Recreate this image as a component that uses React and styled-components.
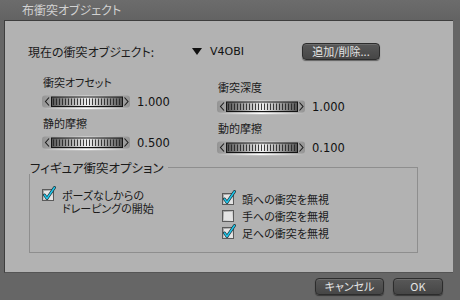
import React from 'react';
import styled, { createGlobalStyle } from 'styled-components';

const GlobalStyle = createGlobalStyle`
  body {
    margin: 0;
    background: #666;
    font-family: "Noto Sans CJK JP", "Noto Sans", sans-serif;
    font-feature-settings: "palt";
  }
`;

const Window = styled.div`
  width: 460px;
  height: 300px;
  display: flex;
  flex-direction: column;
  background: #666;
  overflow: hidden;
`;

const TitleBar = styled.div`
  height: 20px;
  flex: none;
  padding-left: 22px;
  font-size: 12px;
  line-height: 20px;
  color: #d2d2d2;
  background: linear-gradient(#6c6c6c, #636363);
`;

const Panel = styled.div`
  flex: none;
  box-sizing: border-box;
  width: 449px;
  height: 253px;
  margin-left: 4px;
  padding: 22px 0 0 23px;
  background: #b2b2b2;
  border-left: 1px solid #3e3e3e;
  border-top: 1px solid #3e3e3e;
  border-bottom: 1px solid #555;
  color: #1a1a1a;
`;

const CurrentRow = styled.div`
  display: flex;
  align-items: center;
  height: 17px;
`;

const CurrentLabel = styled.span`
  width: 164px;
  font-size: 12px;
`;

const DropArrow = styled.svg`
  width: 10px;
  height: 8px;
  margin-right: 8px;
`;

const ObjectName = styled.span`
  width: 92px;
  font-family: "DejaVu Sans", sans-serif;
  font-size: 11px;
  color: #111;
`;

const DarkButton = styled.button`
  box-sizing: border-box;
  width: ${p => p.$w}px;
  height: 17px;
  padding: 0;
  border: 1px solid #2c2c2c;
  border-radius: 4px;
  background: linear-gradient(#585858, #464646);
  box-shadow: 0 1px 1px rgba(0, 0, 0, 0.45), inset 0 1px 0 rgba(255, 255, 255, 0.12);
  color: #e4e4e4;
  font-family: inherit;
  font-feature-settings: "palt";
  font-size: 11px;
  line-height: 15px;
`;

const SliderGrid = styled.div`
  display: grid;
  grid-template-columns: 175px auto;
  margin-top: 15px;
  padding-left: 12px;
`;

const SliderColumn = styled.div`
  display: flex;
  flex-direction: column;
  gap: 6px;
  padding-top: ${p => p.$offset || 0}px;
`;

const SliderBlock = styled.div`
  display: flex;
  flex-direction: column;
  gap: 5px;
`;

const SliderLabel = styled.div`
  height: 14px;
  padding-left: 3px;
  font-size: 11px;
  line-height: 14px;
`;

const SliderRow = styled.div`
  display: flex;
  align-items: center;
  gap: 5px;
  height: 16px;
`;

const SliderValue = styled.span`
  font-family: "DejaVu Sans", sans-serif;
  font-size: 11.5px;
  color: #111;
`;

const Group = styled.div`
  width: 389px;
  margin: 5px 0 0 1px;
`;

const GroupHeader = styled.div`
  display: flex;
  height: 13px;
`;

const GroupTitle = styled.span`
  padding-left: 1px;
  font-size: 12.5px;
  line-height: 13px;
`;

const GroupRule = styled.div`
  flex: 1;
  margin: 6px 0 0 5px;
  border-top: 1px solid #8e8e8e;
  border-right: 1px solid #8e8e8e;
`;

const GroupBody = styled.div`
  box-sizing: border-box;
  height: 79px;
  display: grid;
  grid-template-columns: 180px 1fr;
  align-items: start;
  padding: 15px 0 0 12px;
  border: 1px solid #8e8e8e;
  border-top: none;
`;

const CheckList = styled.div`
  display: flex;
  flex-direction: column;
  margin-top: 4px;
`;

const CheckItem = styled.label`
  display: flex;
  align-items: flex-start;
  gap: 8px;
  height: ${p => p.$h || 17}px;
  font-size: 11px;
  line-height: 13px;
`;

const CheckText = styled.span`
  padding-top: 0;
`;

const Footer = styled.div`
  flex: 1;
  display: flex;
  justify-content: flex-end;
  align-items: flex-start;
  gap: 9px;
  padding: 5px 17px 0 0;
`;

function Slider() {
  const ticks = [];
  for (let x = 13; x <= 81; x += 3) ticks.push(x);
  return (
    <svg width="92" height="16" viewBox="0 0 92 16">
      <defs>
        <linearGradient id="sl-bg" x1="0" x2="1" y1="0" y2="0">
          <stop offset="0" stopColor="#8c8c8c" />
          <stop offset="0.5" stopColor="#f2f2f2" />
          <stop offset="1" stopColor="#8c8c8c" />
        </linearGradient>
        <linearGradient id="sl-in" x1="0" x2="1" y1="0" y2="0">
          <stop offset="0" stopColor="#555" />
          <stop offset="0.5" stopColor="#f0f0f0" />
          <stop offset="1" stopColor="#555" />
        </linearGradient>
        <linearGradient id="sl-hi" x1="0" x2="1" y1="0" y2="0">
          <stop offset="0" stopColor="#fff" stopOpacity="0" />
          <stop offset="0.5" stopColor="#fff" stopOpacity="1" />
          <stop offset="1" stopColor="#fff" stopOpacity="0" />
        </linearGradient>
      </defs>
      <rect x="2" y="1.5" width="88" height="12" rx="3" fill="url(#sl-bg)" opacity="0.8" />
      <rect x="3" y="14" width="86" height="1.2" fill="url(#sl-hi)" />
      <path d="M9 3.5 L5.5 7.5 L9 11.5" fill="none" stroke="#1e1e1e" strokeWidth="1.1" />
      <rect x="11.5" y="3" width="71" height="9.5" fill="url(#sl-in)" stroke="#141414" />
      {ticks.map(x => (
        <line key={x} x1={x + 0.5} x2={x + 0.5} y1="4.5" y2="11" stroke="#222" strokeWidth="1" opacity="0.85" />
      ))}
      <path d="M84.5 3.5 L88 7.5 L84.5 11.5" fill="none" stroke="#1e1e1e" strokeWidth="1.1" />
    </svg>
  );
}

function CheckBox({ checked }) {
  return (
    <svg width="12" height="12" viewBox="0 0 12 12" style={{ overflow: 'visible', flex: 'none' }}>
      <defs>
        <linearGradient id="cb-bg" x1="0" x2="1" y1="0" y2="1">
          <stop offset="0" stopColor="#9a9a9a" />
          <stop offset="1" stopColor="#ededed" />
        </linearGradient>
      </defs>
      <rect x="0.5" y="0.5" width="11" height="11" fill="url(#cb-bg)" stroke="#5a5a5a" />
      <rect x="2" y="2" width="8" height="8" fill="#e4e4e4" />
      {checked && (
        <g fill="none" strokeLinecap="round" strokeLinejoin="round">
          <path d="M2.5 6 L5 9.5 L12.5 -1.5" stroke="#1b2f36" strokeWidth="3" />
          <path d="M2.5 6 L5 9.5 L12.5 -1.5" stroke="#22c6ea" strokeWidth="1.5" />
        </g>
      )}
    </svg>
  );
}

const sliders = {
  left: [
    { label: '衝突オフセット', value: '1.000' },
    { label: '静的摩擦', value: '0.500' },
  ],
  right: [
    { label: '衝突深度', value: '1.000' },
    { label: '動的摩擦', value: '0.100' },
  ],
};

const options = [
  { label: '頭への衝突を無視', checked: true },
  { label: '手への衝突を無視', checked: false },
  { label: '足への衝突を無視', checked: true },
];

function SliderCol({ items, offset }) {
  return (
    <SliderColumn $offset={offset}>
      {items.map(s => (
        <SliderBlock key={s.label}>
          <SliderLabel>{s.label}</SliderLabel>
          <SliderRow>
            <Slider />
            <SliderValue>{s.value}</SliderValue>
          </SliderRow>
        </SliderBlock>
      ))}
    </SliderColumn>
  );
}

export default function App() {
  return (
    <>
      <GlobalStyle />
      <Window>
        <TitleBar>布衝突オブジェクト</TitleBar>
        <Panel>
          <CurrentRow>
            <CurrentLabel>現在の衝突オブジェクト:</CurrentLabel>
            <DropArrow viewBox="0 0 10 8">
              <polygon points="0,0 10,0 5,7" fill="#111" />
            </DropArrow>
            <ObjectName>V4OBI</ObjectName>
            <DarkButton $w={78}>追加/削除...</DarkButton>
          </CurrentRow>

          <SliderGrid>
            <SliderCol items={sliders.left} />
            <SliderCol items={sliders.right} offset={5} />
          </SliderGrid>

          <Group>
            <GroupHeader>
              <GroupTitle>フィギュア衝突オプション</GroupTitle>
              <GroupRule />
            </GroupHeader>
            <GroupBody>
              <CheckItem $h={27}>
                <CheckBox checked />
                <CheckText>
                  ポーズなしからの
                  <br />
                  ドレーピングの開始
                </CheckText>
              </CheckItem>
              <CheckList>
                {options.map(o => (
                  <CheckItem key={o.label}>
                    <CheckBox checked={o.checked} />
                    <CheckText>{o.label}</CheckText>
                  </CheckItem>
                ))}
              </CheckList>
            </GroupBody>
          </Group>
        </Panel>
        <Footer>
          <DarkButton $w={69}>キャンセル</DarkButton>
          <DarkButton $w={50}>OK</DarkButton>
        </Footer>
      </Window>
    </>
  );
}
